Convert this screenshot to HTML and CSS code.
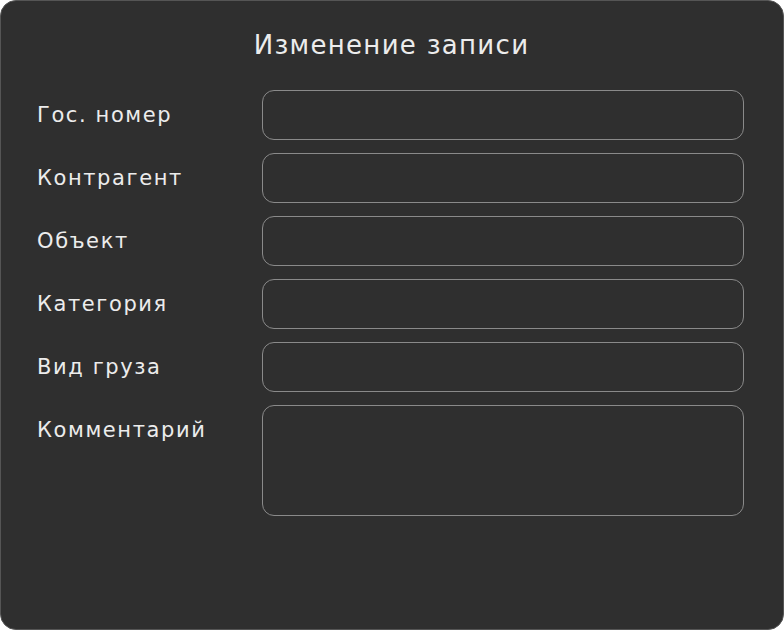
FILE: index.html
```html
<!DOCTYPE html>
<html lang="ru">
<head>
<meta charset="utf-8">
<title>Изменение записи</title>
<link rel="stylesheet" href="styles.css">
</head>
<body>
<div class="card">
  <h1 class="title">Изменение записи</h1>
  <form class="form">
    <label class="label">Гос. номер</label>
    <div class="field"></div>
    <label class="label">Контрагент</label>
    <div class="field"></div>
    <label class="label">Объект</label>
    <div class="field"></div>
    <label class="label">Категория</label>
    <div class="field"></div>
    <label class="label">Вид груза</label>
    <div class="field"></div>
    <label class="label">Комментарий</label>
    <div class="field field-area"></div>
  </form>
</div>
</body>
</html>
```

FILE: styles.css
```css
html, body {
  margin: 0;
  padding: 0;
  background: #ffffff;
}
.card {
  box-sizing: border-box;
  width: 784px;
  height: 630px;
  background: #2f2f2f;
  border: 1px solid #555555;
  border-radius: 16px;
  padding: 24px 39px 0 36px;
  font-family: "DejaVu Sans", sans-serif;
  color: #ececec;
}
.title {
  margin: 0;
  text-align: center;
  font-weight: normal;
  font-size: 26px;
  line-height: 40px;
  letter-spacing: 1.3px;
  padding-left: 2px;
}
.form {
  display: grid;
  grid-template-columns: 225px 1fr;
  row-gap: 13px;
  margin-top: 25px;
}
.label {
  font-size: 21px;
  line-height: 50px;
  letter-spacing: 1.6px;
  white-space: nowrap;
}
.field {
  box-sizing: border-box;
  height: 50px;
  border: 1px solid #8a8a8a;
  border-radius: 12px;
}
.field-area {
  height: 111px;
}
```
